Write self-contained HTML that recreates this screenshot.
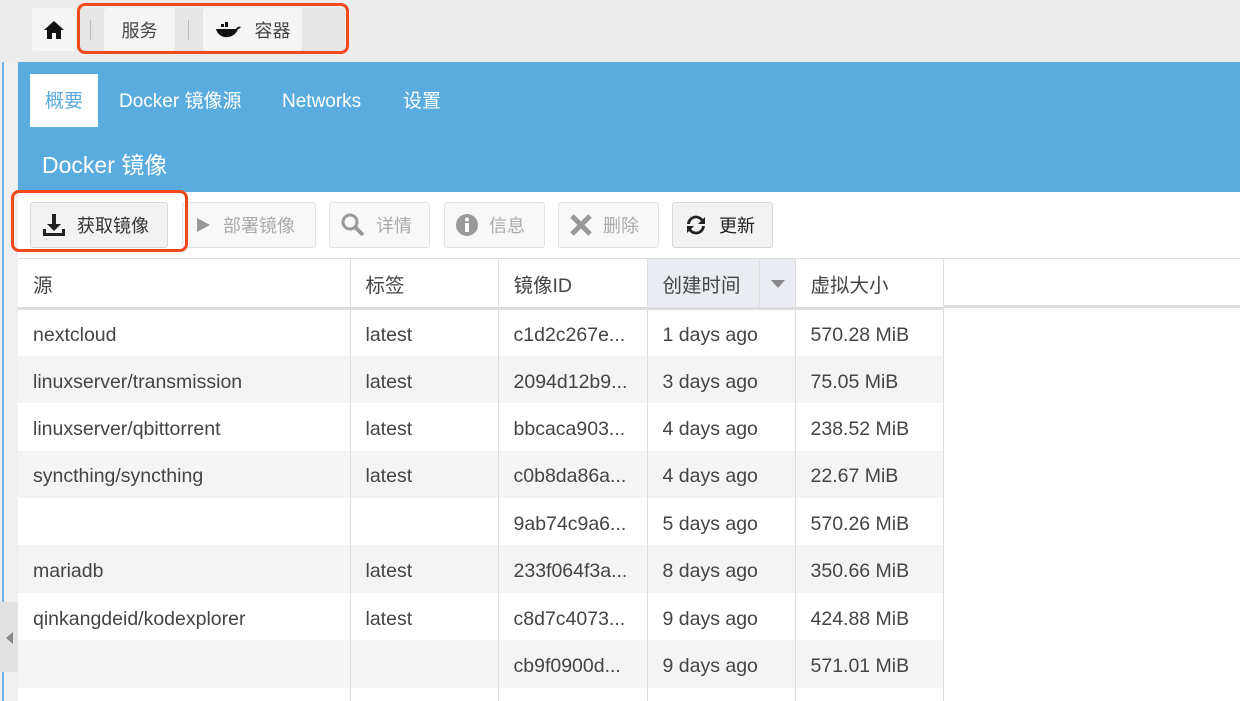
<!DOCTYPE html>
<html><head><meta charset="utf-8"><style>
*{margin:0;padding:0;box-sizing:border-box}
html{width:1240px;height:701px;overflow:hidden}
body{width:1240px;height:701px;overflow:hidden;background:#ececec;font-family:"Liberation Sans","Noto Sans CJK SC",sans-serif;position:relative;color:#444}
.abs{position:absolute}
.left{left:0;top:62px;width:18px;height:639px;background:#efefef}
.left .ln{position:absolute;left:2px;top:0;width:2px;height:639px;background:#6fb2e3}
.bc{top:8px;height:43px;background:#f5f5f5;border-radius:3px;font-size:17px;color:#444;display:flex;align-items:center;justify-content:center}
.blue{left:18px;top:62px;width:1222px;height:130px;background:#5aacdf}
.tab{top:74px;height:53px;font-size:19px;color:#fff;line-height:56px}
.white{left:18px;top:192px;width:1222px;height:509px;background:#fff}
.btn{top:202px;height:46px;border:1px solid #e2e2e2;background:#f8f8f8;border-radius:3px;font-size:17px;color:#aaa;display:flex;align-items:center;padding-left:10px;gap:10px}
.btn.on{color:#333;background:#f2f2f2;border-color:#d8d8d8}
.red{border:3px solid #f04a1c;border-radius:8px}
.tw{position:absolute;left:18px;top:258px;width:1222px;height:443px;overflow:hidden}
table{position:absolute;left:0;top:0;border-collapse:collapse;font-size:19.5px;color:#444}
th{height:50px;font-weight:normal;text-align:left;padding-left:15px;border-right:1px solid #ddd;border-bottom:3px solid #ddd;border-top:1px solid #ddd}
td{height:47.4px;padding-left:15px;padding-top:5px;border-right:1px solid #ddd;white-space:nowrap}
tr.g td{background:#f4f4f4}
</style></head><body>
<div class="abs left"><div class="ln"></div><div class="abs" style="left:0;top:540px;width:18px;height:70px;background:#e2e2e2"></div><div class="abs" style="left:6px;top:570px;width:0;height:0;border-top:6px solid transparent;border-bottom:6px solid transparent;border-right:7px solid #888"></div></div>
<div class="abs bc" style="left:32px;width:44px"><svg width="22" height="20" viewBox="0 0 22 20"><path d="M11 1L1 10h3v9h5v-6h4v6h5v-9h3z" fill="#111"/></svg></div>
<div class="abs" style="left:80px;top:8px;width:265px;height:43px;background:#e6e6e6"></div>
<div class="abs" style="left:90px;top:20px;width:1px;height:20px;background:#bbb"></div>
<div class="abs" style="left:188px;top:20px;width:1px;height:20px;background:#bbb"></div>
<div class="abs bc" style="left:104px;width:71px;font-size:18px">服务</div>
<div class="abs bc" style="left:203px;width:99px;gap:14px;font-size:18px"><svg width="26" height="16" viewBox="0 0 26 16"><rect x="6" y="2" width="3" height="3" fill="#111"/><rect x="10" y="2" width="3" height="3" fill="#111"/><rect x="10" y="0" width="3" height="2" fill="#111"/><path d="M1 7h20c1-2 3-3 5-2-1 1-2 2-3 2-2 6-8 9-14 8C5 14 2 11 1 7z" fill="#111"/></svg>容器</div>
<div class="abs red" style="left:77px;top:3px;width:272px;height:51px"></div>
<div class="abs blue"></div>
<div class="abs tab" style="left:30px;width:68px;background:#fff;color:#5aacdf;text-align:center">概要</div>
<div class="abs tab" style="left:119px">Docker 镜像源</div>
<div class="abs tab" style="left:282px">Networks</div>
<div class="abs tab" style="left:403px">设置</div>
<div class="abs" style="left:42px;top:146px;font-size:23px;color:#fff">Docker 镜像</div>
<div class="abs white"></div>
<div class="abs btn on" style="left:30px;width:138px;font-size:18px"><svg width="26" height="26" viewBox="0 0 26 26"><path d="M11 2h4v10h5l-7 7-7-7h5z" fill="#222"/><path d="M2 17v7h22v-7h-3v4H5v-4z" fill="#222"/></svg>获取镜像</div>
<div class="abs btn" style="left:182px;width:134px;font-size:18px"><svg width="20" height="20"><path d="M4 3l13 7-13 7z" fill="#999"/></svg>部署镜像</div>
<div class="abs btn" style="left:329px;width:101px;font-size:18px"><svg width="26" height="26"><circle cx="10" cy="10" r="7" stroke="#999" stroke-width="3" fill="none"/><path d="M15 15l8 8" stroke="#999" stroke-width="4"/></svg>详情</div>
<div class="abs btn" style="left:444px;width:101px;font-size:18px"><svg width="24" height="24"><circle cx="12" cy="12" r="11" fill="#999"/><rect x="10" y="10" width="4" height="9" fill="#fff"/><circle cx="12" cy="6.5" r="2" fill="#fff"/></svg>信息</div>
<div class="abs btn" style="left:558px;width:101px;font-size:18px"><svg width="24" height="24"><path d="M3 3l18 18M21 3L3 21" stroke="#999" stroke-width="5"/></svg>删除</div>
<div class="abs btn on" style="left:672px;width:101px;font-size:18px"><svg width="26" height="26" viewBox="0 0 26 26"><path d="M4 12a9 9 0 0 1 16-5l2-2v7h-7l3-3a6 6 0 0 0-11 3z" fill="#222"/><path d="M22 14a9 9 0 0 1-16 5l-2 2v-7h7l-3 3a6 6 0 0 0 11-3z" fill="#222"/></svg><span style="color:#222">更新</span></div>
<div class="abs red" style="left:11px;top:190px;width:177px;height:62px"></div>
<div class="abs" style="left:943px;top:258px;width:297px;height:50px;border-top:1px solid #ddd;border-bottom:3px solid #ddd"></div>
<div class="tw">
<table>
<tr><th style="width:332px">源</th><th style="width:148px">标签</th><th style="width:149px">镜像ID</th><th style="width:148px;background:#e9edf1;position:relative">创建时间<span style="position:absolute;left:111px;top:0;width:1px;height:47px;background:#ddd"></span><span style="position:absolute;left:123px;top:21px;border-left:7px solid transparent;border-right:7px solid transparent;border-top:8px solid #888"></span></th><th style="width:148px">虚拟大小</th></tr>
<tr><td>nextcloud</td><td>latest</td><td>c1d2c267e...</td><td>1 days ago</td><td>570.28 MiB</td></tr>
<tr class="g"><td>linuxserver/transmission</td><td>latest</td><td>2094d12b9...</td><td>3 days ago</td><td>75.05 MiB</td></tr>
<tr><td>linuxserver/qbittorrent</td><td>latest</td><td>bbcaca903...</td><td>4 days ago</td><td>238.52 MiB</td></tr>
<tr class="g"><td>syncthing/syncthing</td><td>latest</td><td>c0b8da86a...</td><td>4 days ago</td><td>22.67 MiB</td></tr>
<tr><td></td><td></td><td>9ab74c9a6...</td><td>5 days ago</td><td>570.26 MiB</td></tr>
<tr class="g"><td>mariadb</td><td>latest</td><td>233f064f3a...</td><td>8 days ago</td><td>350.66 MiB</td></tr>
<tr><td>qinkangdeid/kodexplorer</td><td>latest</td><td>c8d7c4073...</td><td>9 days ago</td><td>424.88 MiB</td></tr>
<tr class="g"><td></td><td></td><td>cb9f0900d...</td><td>9 days ago</td><td>571.01 MiB</td></tr>
<tr><td></td><td></td><td></td><td></td><td></td></tr>
</table>
</div>
</body></html>
